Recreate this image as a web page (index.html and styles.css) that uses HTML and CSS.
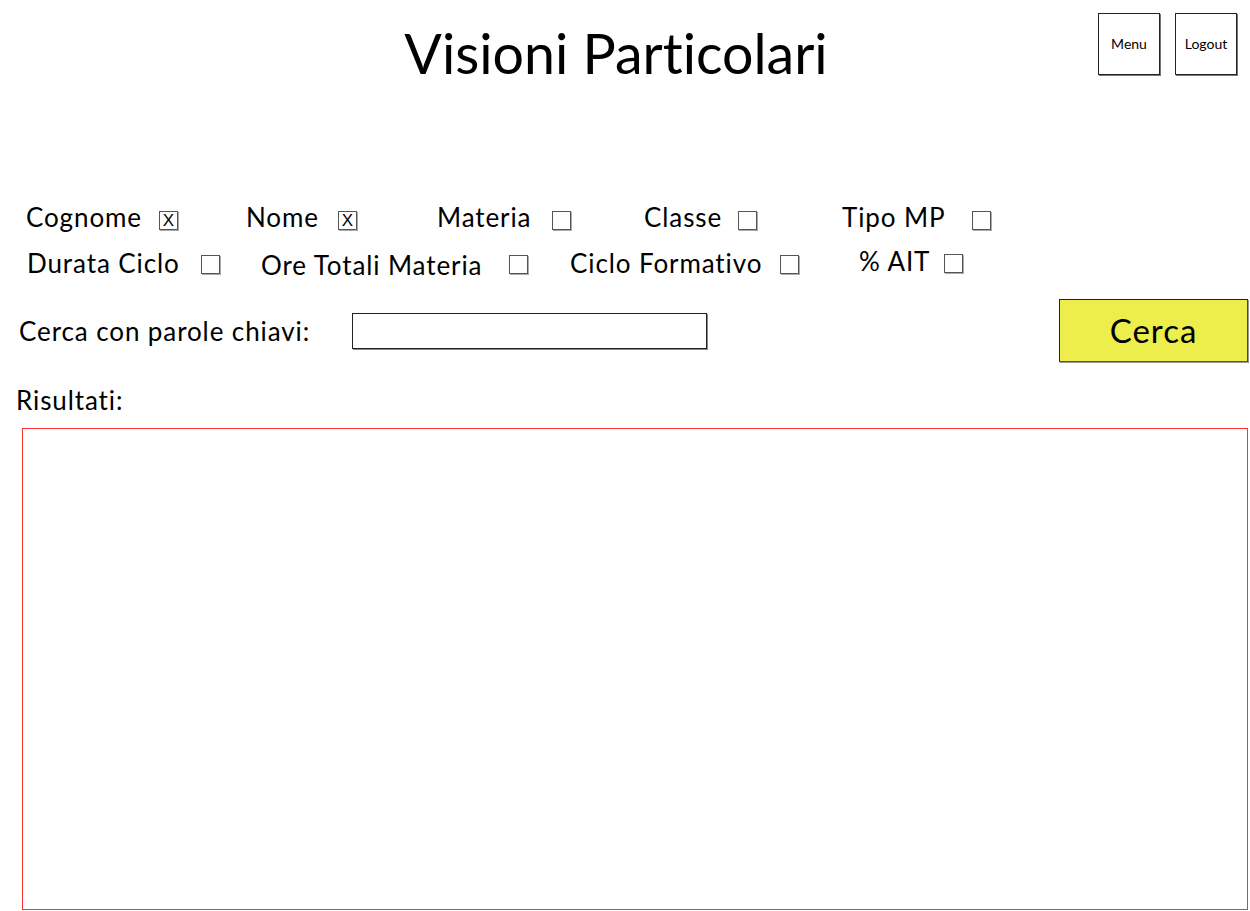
FILE: index.html
```html
<!DOCTYPE html>
<html lang="it">
<head>
<meta charset="utf-8">
<title>Visioni Particolari</title>
<link rel="stylesheet" href="styles.css">
</head>
<body>
<header class="top">
  <div class="top-spacer"></div>
  <h1 class="title">Visioni Particolari</h1>
  <nav class="nav">
    <button class="nav-btn">Menu</button>
    <button class="nav-btn">Logout</button>
  </nav>
</header>

<section class="fields">
  <div class="field-row row-1">
    <label class="field"><span class="field-label">Cognome</span><span class="cb">X</span></label>
    <label class="field"><span class="field-label">Nome</span><span class="cb">X</span></label>
    <label class="field"><span class="field-label">Materia</span><span class="cb"></span></label>
    <label class="field"><span class="field-label">Classe</span><span class="cb"></span></label>
    <label class="field"><span class="field-label">Tipo MP</span><span class="cb"></span></label>
  </div>
  <div class="field-row row-2">
    <label class="field"><span class="field-label">Durata Ciclo</span><span class="cb"></span></label>
    <label class="field"><span class="field-label">Ore Totali Materia</span><span class="cb"></span></label>
    <label class="field"><span class="field-label">Ciclo Formativo</span><span class="cb"></span></label>
    <label class="field"><span class="field-label">% AIT</span><span class="cb"></span></label>
  </div>
</section>

<section class="search">
  <span class="search-label">Cerca con parole chiavi:</span>
  <span class="search-input"></span>
  <button class="search-btn">Cerca</button>
</section>

<section class="results">
  <div class="results-label">Risultati:</div>
  <div class="results-box"></div>
</section>
</body>
</html>
```

FILE: styles.css
```css
html, body {
  margin: 0;
  padding: 0;
  background: #fff;
}

body {
  font-family: Lato, "Liberation Sans", sans-serif;
  font-variant-ligatures: none;
  color: #000;
  width: 1250px;
}

button {
  font-family: inherit;
  font-variant-ligatures: none;
  color: #000;
  cursor: pointer;
}

/* ---------- header ---------- */
.top {
  display: grid;
  grid-template-columns: 1fr auto 1fr;
  align-items: start;
  padding-top: 13px;
}

.title {
  margin: 7px 18px 0 0;
  font-size: 55.5px;
  font-weight: 400;
  line-height: 66px;
  white-space: nowrap;
}

.nav {
  justify-self: end;
  display: flex;
  gap: 15px;
  padding-right: 13px;
}

.nav-btn {
  width: 62px;
  height: 62px;
  padding: 0 0 2px;
  background: #fff;
  border: 1px solid #222;
  box-shadow: 1px 1px 0 #777;
  font-size: 14px;
}

/* ---------- checkbox fields ---------- */
.fields {
  margin-top: 116px;
}

.field-row {
  display: flex;
  align-items: flex-start;
  height: 30px;
}

.row-2 {
  margin-top: 16px;
}

.field {
  display: flex;
  align-items: flex-start;
  font-size: 26px;
  line-height: 30px;
  letter-spacing: 0.9px;
}

.field-label {
  white-space: nowrap;
}

.cb {
  box-sizing: border-box;
  width: 19px;
  height: 19px;
  margin-top: 9px;
  border: 1px solid #555;
  box-shadow: 1px 1px 0 #aaa;
  font-family: "Liberation Sans", sans-serif;
  font-size: 17px;
  letter-spacing: 0;
  line-height: 17px;
  text-align: center;
}

.row-2 .cb {
  margin-top: 7px;
}

/* row 1 positions */
.row-1 .field:nth-child(1) { margin-left: 26px; }
.row-1 .field:nth-child(1) .field-label { width: 133px; }
.row-1 .field:nth-child(2) { margin-left: 68px; }
.row-1 .field:nth-child(2) .field-label { width: 92px; }
.row-1 .field:nth-child(3) { margin-left: 80px; }
.row-1 .field:nth-child(3) .field-label { width: 115px; }
.row-1 .field:nth-child(4) { margin-left: 73px; }
.row-1 .field:nth-child(4) .field-label { width: 94px; }
.row-1 .field:nth-child(5) { margin-left: 85px; }
.row-1 .field:nth-child(5) .field-label { width: 130px; }

/* row 2 positions */
.row-2 .field:nth-child(1) { margin-left: 27px; }
.row-2 .field:nth-child(1) .field-label { width: 174px; }
.row-2 .field:nth-child(2) { margin-left: 41px; }
.row-2 .field:nth-child(2) .field-label { width: 248px; padding-top: 2px; }
.row-2 .field:nth-child(3) { margin-left: 42px; }
.row-2 .field:nth-child(3) .field-label { width: 210px; }
.row-2 .field:nth-child(4) { margin-left: 60px; }
.row-2 .field:nth-child(4) .field-label { width: 85px; margin-top: -2px; }
.row-2 .field:nth-child(4) .cb { margin-top: 6px; }

/* ---------- search ---------- */
.search {
  display: flex;
  align-items: center;
  margin-top: 21px;
  padding-left: 19px;
}

.search-label {
  width: 333px;
  font-size: 26px;
  line-height: 30px;
  letter-spacing: 0.9px;
  white-space: nowrap;
}

.search-input {
  box-sizing: border-box;
  width: 355px;
  height: 36px;
  border: 1px solid #222;
  box-shadow: 1px 1px 0 #888;
  background: #fff;
}

.search-btn {
  box-sizing: border-box;
  margin-left: auto;
  margin-right: 2px;
  width: 189px;
  height: 63px;
  padding: 0;
  background: #eded4b;
  border: 1px solid #222;
  border-right-color: #444;
  border-bottom-color: #555;
  box-shadow: 1px 1px 0 #999;
  font-size: 33px;
  letter-spacing: 1px;
  line-height: 1;
}

/* ---------- results ---------- */
.results {
  margin-top: 23px;
}

.results-label {
  padding-left: 16px;
  font-size: 26px;
  line-height: 30px;
  letter-spacing: 0.9px;
}

.results-box {
  box-sizing: border-box;
  margin: 13px 2px 0 22px;
  height: 482px;
  border: 1px solid #ff3030;
}
```
